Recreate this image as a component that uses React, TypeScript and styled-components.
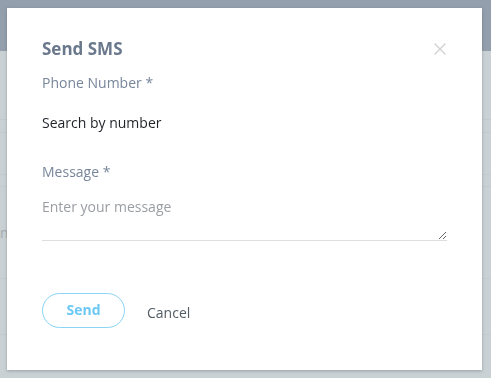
import React from 'react';
import styled, { createGlobalStyle } from 'styled-components';

const GlobalStyle = createGlobalStyle`
  html, body {
    margin: 0;
    padding: 0;
    background: #c9d1d4;
    font-family: "Open Sans", "Liberation Sans", sans-serif;
  }
`;

const Page = styled.div`
  width: 491px;
  height: 378px;
  overflow: hidden;
  display: flex;
  flex-direction: column;
  background: #c9d1d4;
`;

const TopBar = styled.div`
  height: 51px;
  flex-shrink: 0;
  background: #939fac;
`;

const BgRow = styled.div<{ h: number }>`
  height: ${p => p.h}px;
  flex-shrink: 0;
  border-bottom: 1px solid #c2cacd;
  color: #a4abae;
  font-size: 14px;
  line-height: ${p => p.h}px;
  overflow: hidden;
`;

const Modal = styled.div`
  position: fixed;
  left: 7px;
  top: 8px;
  width: 475px;
  height: 362px;
  box-sizing: border-box;
  background: #ffffff;
  box-shadow: 0 1px 3px rgba(60, 70, 80, 0.35);
  padding: 30px 35px 0 35px;
  display: flex;
  flex-direction: column;
`;

const Header = styled.div`
  display: flex;
  justify-content: space-between;
  align-items: center;
  height: 22px;
`;

const Title = styled.h2`
  margin: 0;
  font-size: 17px;
  line-height: 22px;
  font-weight: 700;
  color: #6a788c;
`;

const Close = styled.button`
  border: none;
  background: none;
  padding: 0;
  width: 14px;
  height: 14px;
  display: flex;
  align-items: center;
  justify-content: center;
  cursor: pointer;
`;

const Label = styled.label<{ top: number }>`
  display: block;
  margin-top: ${p => p.top}px;
  font-size: 14px;
  line-height: 18px;
  color: #78869a;
`;

const PhoneInput = styled.input`
  display: block;
  margin-top: 22px;
  width: 100%;
  border: none;
  outline: none;
  padding: 0;
  font-family: inherit;
  font-size: 14px;
  line-height: 18px;
  height: 18px;
  color: #1f2328;
  &::placeholder {
    color: #1f2328;
  }
`;

const MessageInput = styled.textarea`
  display: block;
  margin-top: 17px;
  width: 100%;
  box-sizing: border-box;
  height: 43px;
  border: none;
  border-bottom: 1px solid #dcdfe2;
  outline: none;
  padding: 0;
  resize: vertical;
  font-family: inherit;
  font-size: 14px;
  line-height: 18px;
  color: #333;
  &::placeholder {
    color: #9a9ea3;
  }
`;

const Actions = styled.div`
  margin-top: 52px;
  display: flex;
  align-items: center;
  gap: 22px;
`;

const SendButton = styled.button`
  width: 83px;
  height: 35px;
  box-sizing: border-box;
  border: 1px solid #8ad4f6;
  border-radius: 18px;
  background: #fff;
  color: #6cc8f5;
  font-family: inherit;
  font-weight: 700;
  font-size: 14px;
  padding: 0 0 3px 0;
  cursor: pointer;
`;

const CancelButton = styled.button`
  border: none;
  background: none;
  padding: 0;
  margin-top: 4px;
  font-family: inherit;
  font-size: 14px;
  color: #525c64;
  cursor: pointer;
`;

export default function App() {
  return (
    <>
      <GlobalStyle />
      <Page>
        <TopBar />
        <BgRow h={68} />
        <BgRow h={12} />
        <BgRow h={41} />
        <BgRow h={11} />
        <BgRow h={91}>n</BgRow>
        <BgRow h={55} />
      </Page>
      <Modal>
        <Header>
          <Title>Send SMS</Title>
          <Close aria-label="Close">
            <svg width="12" height="12" viewBox="0 0 12 12">
              <path d="M1 1 L11 11 M11 1 L1 11" stroke="#cfd1d3" strokeWidth="1.4" strokeLinecap="round" />
            </svg>
          </Close>
        </Header>
        <Label top={14}>Phone Number *</Label>
        <PhoneInput placeholder="Search by number" />
        <Label top={31}>Message *</Label>
        <MessageInput placeholder="Enter your message" />
        <Actions>
          <SendButton>Send</SendButton>
          <CancelButton>Cancel</CancelButton>
        </Actions>
      </Modal>
    </>
  );
}
